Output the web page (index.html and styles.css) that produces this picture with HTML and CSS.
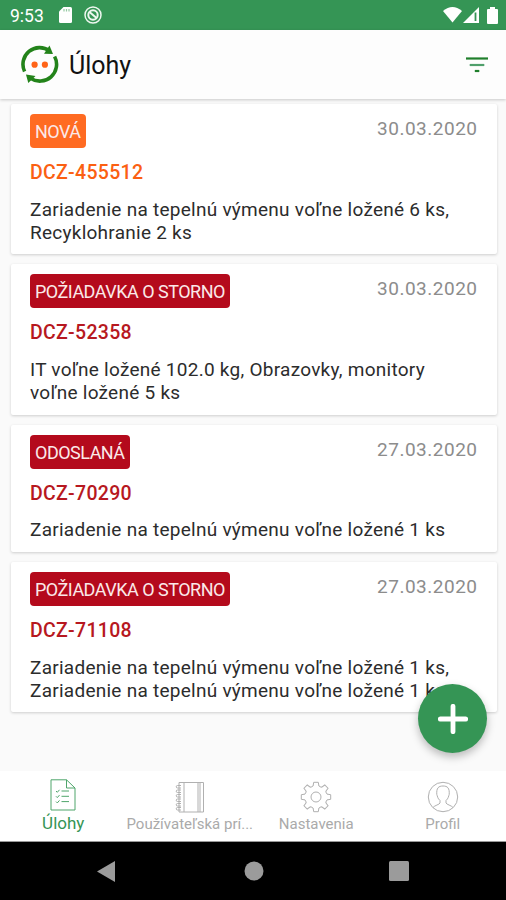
FILE: index.html
```html
<!DOCTYPE html>
<html lang="sk">
<head>
  <meta charset="UTF-8" />
  <meta name="viewport" content="width=device-width, initial-scale=1.0"/>
  <title>Úlohy</title>
  <link rel="stylesheet" href="styles.css">
</head>
<body>
  <div class="statusbar">
    <span class="time">9:53</span>
    <svg class="sd" width="13" height="16" viewBox="0 0 13 16"><path d="M4.5 0H11.5Q13 0 13 1.5V14.5Q13 16 11.5 16H1.5Q0 16 0 14.5V4.5Z" fill="#fff"/><path d="M5 2v2.5M7.500 2v2.500M10 2v2.500" stroke="#94c9a2" stroke-width="1.200"/></svg>
    <svg class="sync" width="18" height="18" viewBox="0 0 18 18" fill="none" stroke="#eef7f0"><circle cx="9" cy="9" r="8" stroke-width="1.500"/><circle cx="9" cy="9" r="4.700" stroke-width="2"/><path d="M5.500 6l7 6" stroke-width="2"/></svg>
    <div class="status-right">
      <svg width="19" height="16" viewBox="0 0 19 16"><path d="M0 4Q9.500-4 19 4L9.500 15.500Z" fill="#fff"/></svg>
      <svg width="16" height="16" viewBox="0 0 16 16"><path d="M16 0V16H0Z" fill="#fff"/><path d="M12.500 5.500V14" stroke="#359555" stroke-width="1.800"/></svg>
      <svg class="battery" width="11" height="17" viewBox="0 0 11 17"><path d="M3 0H8V2H10Q11 2 11 3V16Q11 17 10 17H1Q0 17 0 16V3Q0 2 1 2H3Z" fill="#fff"/></svg>
    </div>
  </div>

  <header class="toolbar">
    <svg class="logo" width="38" height="39" viewBox="0 0 38 39">
      <g fill="none" stroke="#23831a" stroke-width="3.600">
        <path d="M3.600 26.500A16.700 16.700 0 0 1 28.500 5.800"/>
        <path d="M33.600 11.500A16.700 16.700 0 0 1 9.500 33.200"/>
      </g>
      <path d="M28.500 .5L32 9L23 8.800Z" fill="#23831a"/>
      <path d="M5 29.500L14.500 31L7.300 38Z" fill="#23831a"/>
      <circle cx="13.600" cy="19.700" r="3.100" fill="#ff6418"/>
      <circle cx="23.900" cy="19.700" r="3.100" fill="#ff6418"/>
    </svg>
    <h1>Úlohy</h1>
    <svg class="filter" width="22" height="16" viewBox="0 0 22 16"><path d="M0 1.500H22" stroke="#1f7f2b" stroke-width="2.200"/><path d="M3.700 8H18.300" stroke="#4f9f6b" stroke-width="2.200"/><path d="M8.800 14H13.300" stroke="#1f7f2b" stroke-width="2.200"/></svg>
  </header>

  <main class="list">
    <article class="card">
      <div class="row"><span class="badge orange">NOVÁ</span><span class="date">30.03.2020</span></div>
      <div class="code new">DCZ-455512</div>
      <p>Zariadenie na tepelnú výmenu voľne ložené 6 ks,<br>Recyklohranie 2 ks</p>
    </article>
    <article class="card">
      <div class="row"><span class="badge">POŽIADAVKA O STORNO</span><span class="date">30.03.2020</span></div>
      <div class="code">DCZ-52358</div>
      <p>IT voľne ložené 102.0 kg, Obrazovky, monitory<br>voľne ložené 5 ks</p>
    </article>
    <article class="card">
      <div class="row"><span class="badge">ODOSLANÁ</span><span class="date">27.03.2020</span></div>
      <div class="code">DCZ-70290</div>
      <p>Zariadenie na tepelnú výmenu voľne ložené 1 ks</p>
    </article>
    <article class="card">
      <div class="row"><span class="badge">POŽIADAVKA O STORNO</span><span class="date">27.03.2020</span></div>
      <div class="code">DCZ-71108</div>
      <p>Zariadenie na tepelnú výmenu voľne ložené 1 ks,<br>Zariadenie na tepelnú výmenu voľne ložené 1 ks</p>
    </article>
    <button class="fab" aria-label="Pridať">
      <svg width="30" height="30" viewBox="0 0 30 30"><path d="M15 2.300V27.700M2.300 15H27.700" stroke="#fff" stroke-width="4.800" stroke-linecap="round"/></svg>
    </button>
  </main>

  <nav class="tabs">
    <a class="tab active">
      <svg width="32" height="32" viewBox="0 0 32 32"><path d="M4 .8H19.500L28 9V31H4ZM19.500 .8V9H28M9 12l1.300 1.300 2.200-2.500M9 17.300l1.300 1.300 2.200-2.500M9 22.600l1.300 1.300 2.200-2.500M14.500 12H22M14.500 17.300H22M14.500 22.600H22"/></svg>
      <span>Úlohy</span>
    </a>
    <a class="tab">
      <svg width="32" height="32" viewBox="0 0 32 32"><path d="M5 1.500H29.500V31H5ZM10 1.500V31M24 1.500V31M26 1.500V31"/><path d="M7 4.500H3.500a1.200 1.200 0 0 0 0 2.500H7M7 9H3.500a1.200 1.200 0 0 0 0 2.500H7M7 13.500H3.500a1.200 1.200 0 0 0 0 2.500H7M7 18H3.500a1.200 1.200 0 0 0 0 2.500H7M7 22.500H3.500a1.200 1.200 0 0 0 0 2.500H7M7 26.500H3.500a1.200 1.200 0 0 0 0 2.500H7"/></svg>
      <span>Používateľská prí...</span>
    </a>
    <a class="tab">
      <svg width="32" height="32" viewBox="-16 -16 32 32">
        <defs><path id="tooth" d="M-4.300-10.300L-2.900-11L-2.300-14.700H2.300L2.900-11L4.300-10.300"/></defs>
        <use href="#tooth"/><use href="#tooth" transform="rotate(45)"/><use href="#tooth" transform="rotate(90)"/><use href="#tooth" transform="rotate(135)"/>
        <use href="#tooth" transform="rotate(180)"/><use href="#tooth" transform="rotate(225)"/><use href="#tooth" transform="rotate(270)"/><use href="#tooth" transform="rotate(315)"/>
        <circle r="5"/>
      </svg>
      <span>Nastavenia</span>
    </a>
    <a class="tab">
      <svg width="32" height="32" viewBox="0 0 32 32"><circle cx="16" cy="16" r="14.700"/><path d="M6 26.500C7.500 24.500 12.500 23.500 13 22V19.500C10.500 17.500 10.500 15 9.800 13.500C9.300 7 11.500 5 16 5S22.700 7 22.200 13.500C21.500 15 21.500 17.500 19 19.500V22C19.500 23.500 24.500 24.500 26 26.500"/></svg>
      <span>Profil</span>
    </a>
  </nav>

  <footer class="navbar">
    <svg width="18" height="21" viewBox="0 0 18 21"><path d="M18 0V21L0 10.500Z"/></svg>
    <svg class="home" width="20" height="20" viewBox="0 0 20 20"><circle cx="10" cy="10" r="9.500"/></svg>
    <svg width="20" height="20" viewBox="0 0 20 20"><rect width="20" height="20" rx="1.500"/></svg>
  </footer>
</body>
</html>
```
FILE: styles.css
```css
html, body {
  margin: 0;
  padding: 0;
  height: 100%;
  overflow: hidden;
  font-family: Roboto, sans-serif;
}

body {
  display: flex;
  flex-direction: column;
  background: #fafafa;
  color: #2c2c2c;
}

svg {
  display: block;
  flex: none;
}

.statusbar {
  display: flex;
  align-items: center;
  height: 30px;
  flex: none;
  box-sizing: border-box;
  padding: 0 8px 0 10px;
  background: #359555;
  color: #fff;
}

.time {
  width: 49px;
  padding-top: 1px;
  font-size: 17.5px;
}

.sync {
  margin-left: 12px;
}

.status-right {
  display: flex;
  align-items: center;
  gap: 1px;
  margin-left: auto;
}

.battery {
  margin-left: 7px;
}

.toolbar {
  display: flex;
  align-items: center;
  height: 69px;
  flex: none;
  box-sizing: border-box;
  padding: 0 18px 0 21px;
  background: #fdfdfd;
  box-shadow: 0 1px 3px rgba(0, 0, 0, 0.2);
  z-index: 1;
}

h1 {
  margin: 2px 0 0 10px;
  font-size: 25px;
  font-weight: 400;
  color: #111;
}

.filter {
  margin-left: auto;
}

.list {
  position: relative;
  flex: 1;
  display: flex;
  flex-direction: column;
  gap: 10px;
  padding: 5px 9px 0 11px;
}

.card {
  padding: 10px 20px 10.5px 19px;
  background: #fff;
  border-radius: 2px;
  box-shadow: 0 1px 3px rgba(0, 0, 0, 0.18);
}

.row {
  display: flex;
  justify-content: space-between;
  align-items: flex-start;
}

.badge {
  height: 33px;
  padding: 1px 5px 0;
  border-radius: 4px;
  background: #b40a1c;
  color: #fbe9e9;
  font-size: 18px;
  letter-spacing: -0.5px;
  line-height: 34px;
}

.badge.orange {
  background: #ff6b22;
}

.date {
  color: #8c8c8c;
  font-size: 19px;
  letter-spacing: 0.5px;
  line-height: 29px;
  margin-right: -0.5px;
}

.code {
  margin-top: 13px;
  color: #b71820;
  font-size: 19.5px;
  font-weight: 500;
  letter-spacing: 0.3px;
  line-height: 24px;
}

.code.new {
  color: #fb6012;
}

.card p {
  margin: 12.8px 0 0;
  font-size: 19px;
  letter-spacing: 0.26px;
  line-height: 23px;
  white-space: nowrap;
}

.fab {
  position: absolute;
  right: 19px;
  bottom: 18px;
  display: flex;
  align-items: center;
  justify-content: center;
  width: 69px;
  height: 69px;
  padding: 0;
  border: none;
  border-radius: 50%;
  background: #359555;
  box-shadow: 0 4px 8px rgba(0, 0, 0, 0.26);
}

.tabs {
  display: flex;
  height: 71px;
  flex: none;
  box-sizing: border-box;
  padding-top: 10px;
  background: #fff;
  border-bottom: 1px solid #999;
}

.tab {
  width: 25%;
  display: flex;
  flex-direction: column;
  align-items: center;
  color: #aaa;
  font-size: 15px;
  line-height: 23px;
  white-space: nowrap;
}

.tab svg {
  fill: none;
  stroke: #b0b0b0;
  stroke-width: 1;
}

.tab.active {
  margin-top: -2px;
  color: #359555;
  font-size: 17px;
  line-height: 25px;
}

.tab.active svg {
  stroke: #4fa56b;
}

.navbar {
  display: flex;
  align-items: center;
  justify-content: space-between;
  height: 58px;
  flex: none;
  box-sizing: border-box;
  padding: 0 97px;
  background: #000;
}

.navbar svg {
  fill: #9b9b9b;
}

.navbar .home {
  margin-left: 3px;
}
```
